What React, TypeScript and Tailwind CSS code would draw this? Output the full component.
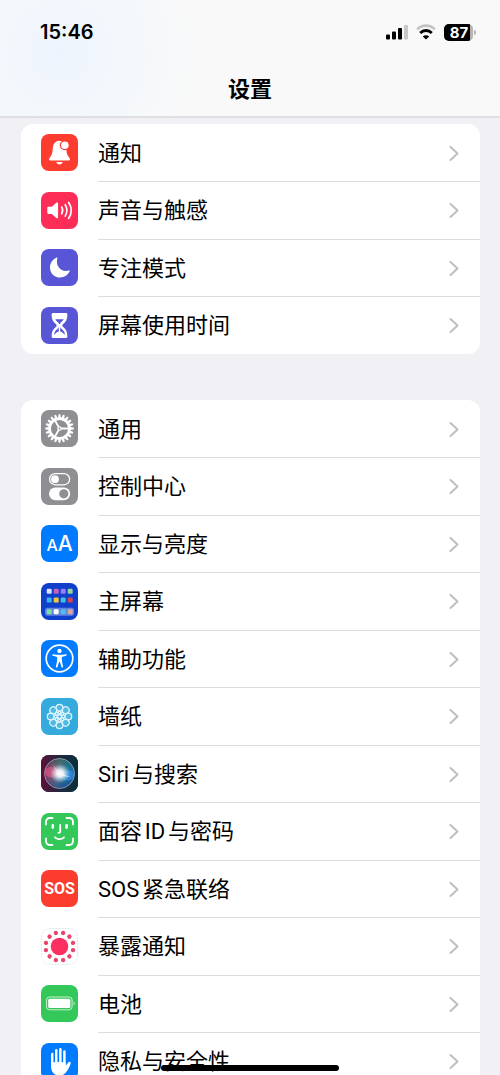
import type { ReactNode } from "react"

const GEAR_TEETH = Array.from({ length: 20 }, (_, i) => i * 18)
const PETALS = Array.from({ length: 8 }, (_, i) => i * 45)
const DOTS = Array.from({ length: 12 }, (_, i) => i * 30 + 15)

const HOME_APPS = [
    ["#d5e3fb", "#c65fc0", "#9b7bf5", "#8fd6a0"],
    ["#35b4ee", "#f3c93a", "#45bfe0", "#d4454f"],
    ["#7be0a0", "#ffffff", "#4cc0ee", "#d8a79c"],
]

function Glyph({ children }: { children: ReactNode }) {
    return (
        <svg viewBox="0 0 37 37" className="size-full" fill="none" aria-hidden="true">
            {children}
        </svg>
    )
}

function BellIcon() {
    return (
        <Glyph>
            <path d="M18.300 6.800c-4.800.3-6.400 4-6.600 8.300-.2 4.600-1.300 6.800-3.200 9-.8 1-.5 2.500.9 2.500h18.200c1.400 0 1.700-1.500.9-2.500-1.900-2.200-3-4.400-3.200-9-.3-4-2.200-8-7-8.300z" fill="white" />
            <path d="M15.300 28h6.400c-.4 1.500-1.600 2.500-3.200 2.500s-2.800-1-3.200-2.500z" fill="white" />
            <circle cx="23.800" cy="11.200" r="5" fill="#fd3c30" />
            <circle cx="23.800" cy="11.200" r="3.800" fill="white" />
        </Glyph>
    )
}

function SpeakerIcon() {
    return (
        <Glyph>
            <path d="M6.300 16.200c0-.9.500-1.400 1.400-1.400h3.100l4.500-4c.8-.7 1.800-.3 1.800.8v13.600c0 1.100-1 1.500-1.800.8l-4.500-4H7.700c-.9 0-1.400-.5-1.400-1.400z" fill="white" />
            <path d="M20.700 14.900c1.200 2.200 1.200 4.800 0 7M24.200 12.700c2.200 3.600 2.200 7.800 0 11.400M27.700 10.500c3.300 5 3.300 10.800 0 15.800" stroke="white" strokeWidth="1.700" strokeLinecap="round" />
        </Glyph>
    )
}

function MoonIcon() {
    return (
        <Glyph>
            <path d="M15.700 8.500c.5-.2.900.2.700.7-2.300 7.500 3.900 14.600 11.600 12.300.6-.2 1 .3.700.8-1.800 3.800-5.400 6.200-9.600 6.200C13.400 28.500 9 24 9 18.400c0-4.400 2.600-8.200 6.700-9.900z" fill="white" />
        </Glyph>
    )
}

function HourglassIcon() {
    return (
        <Glyph>
            <path d="M12.200 6h12.600c1 0 1.600.6 1.600 1.500 0 4.800-1.400 7.300-4.200 9.400-1.100.8-1.100 2.400 0 3.200 2.800 2.100 4.200 4.600 4.200 9.400 0 .9-.6 1.500-1.600 1.500H12.200c-1 0-1.600-.6-1.600-1.500 0-4.800 1.400-7.300 4.200-9.400 1.100-.8 1.100-2.400 0-3.200-2.800-2.100-4.200-4.600-4.200-9.400 0-.9.600-1.500 1.600-1.500z" fill="white" />
            <path d="M14.300 12.300h8.400c-.6 1.200-1.600 2.200-3 3.200-.5.400-.6.900-.6 1.600h-1.200c0-.7-.1-1.200-.6-1.600-1.400-1-2.400-2-3-3.200z" fill="#5856d6" />
            <path d="M17.800 18v6.600c-2 .7-3.800 1.900-4.800 3.500.2-3 1.500-4.800 3.600-6.400.9-.7 1.200-1.500 1.200-3.700zM19.200 18v6.600c2 .7 3.800 1.900 4.800 3.500-.2-3-1.500-4.800-3.600-6.400-.9-.7-1.200-1.500-1.200-3.700z" fill="#5856d6" />
        </Glyph>
    )
}

function GearIcon() {
    return (
        <Glyph>
            {GEAR_TEETH.map((angle) => (
                <path key={angle} d="M17 8.500l.6-4.200h1.800l.6 4.200z" fill="white" transform={`rotate(${angle} 18.500 18.500)`} />
            ))}
            <circle cx="18.500" cy="18.500" r="9.900" stroke="white" strokeWidth="2.600" />
            <path d="M18.500 18.500h10M18.500 18.500l-5-8.700M18.500 18.500l-5 8.700" stroke="white" strokeWidth="1.800" />
            <circle cx="18.500" cy="18.500" r="2.200" fill="white" />
            <circle cx="18.500" cy="18.500" r=".9" fill="#8e8e93" />
        </Glyph>
    )
}

function TogglesIcon() {
    return (
        <Glyph>
            <rect x="8.600" y="5.600" width="20" height="11.200" rx="5.600" stroke="white" strokeWidth="1.300" />
            <circle cx="14" cy="11.200" r="3.900" fill="white" />
            <rect x="8" y="19.400" width="21.200" height="12.800" rx="6.400" fill="white" />
            <circle cx="22.800" cy="25.800" r="4.600" fill="#8e8e93" />
        </Glyph>
    )
}

function TextSizeIcon() {
    return (
        <span className="flex items-baseline justify-center font-['Inter'] font-medium leading-none text-white">
            <span className="text-[16px]">A</span>
            <span className="text-[21px]">A</span>
        </span>
    )
}

function HomeScreenIcon() {
    return (
        <Glyph>
            <rect x="4" y="24.700" width="29" height="8" rx="2.500" fill="white" fillOpacity=".35" />
            {HOME_APPS.map((row, r) =>
                row.map((color, c) => (
                    <rect key={`${r}-${c}`} x={5.700 + c * 7} y={[5.800, 14.600, 26.200][r]} width="5" height="5" rx="1.200" fill={color} />
                ))
            )}
        </Glyph>
    )
}

function AccessibilityIcon() {
    return (
        <Glyph>
            <circle cx="18.500" cy="18.500" r="13.300" stroke="white" strokeWidth="1.700" />
            <circle cx="18.500" cy="10.900" r="2.200" fill="white" />
            <path d="M12.200 14.200c4.200.8 8.400.8 12.600 0 1-.2 1.300 1.200.3 1.500l-3.600 1c-.5.100-.7.400-.7.900 0 3 .5 5.700 1.300 8.900.3 1.100-1.200 1.500-1.600.5l-1.600-5h-.8l-1.600 5c-.4 1-1.900.6-1.600-.5.800-3.200 1.300-5.900 1.300-8.900 0-.5-.2-.8-.7-.9l-3.600-1c-1-.3-.7-1.700.3-1.500z" fill="white" />
        </Glyph>
    )
}

function FlowerIcon() {
    return (
        <Glyph>
            {PETALS.map((angle) => (
                <g key={angle} transform={`rotate(${angle} 18.500 18.500)`} stroke="#dcf6ff" strokeWidth="1.300">
                    <circle cx="18.500" cy="9.700" r="3.400" fill="#7fd0ee" fillOpacity=".4" />
                    <path d="M18.500 16.400c-1.800-1.200-1.800-2.500 0-3.300 1.800.8 1.800 2.100 0 3.300z" />
                </g>
            ))}
            <circle cx="18.500" cy="18.500" r="1.900" stroke="#dcf6ff" strokeWidth="1.200" />
        </Glyph>
    )
}

function SiriIcon() {
    return (
        <Glyph>
            <defs>
                <linearGradient id="siri-bg" x1="0" y1="0" x2="1" y2="0">
                    <stop offset="0" stopColor="#5c0f38" />
                    <stop offset=".5" stopColor="#20283f" />
                    <stop offset="1" stopColor="#07313a" />
                </linearGradient>
                <linearGradient id="siri-orb" x1="0" y1=".4" x2="1" y2=".6">
                    <stop offset="0" stopColor="#b3205c" />
                    <stop offset=".45" stopColor="#7c8398" />
                    <stop offset=".7" stopColor="#2b86a8" />
                    <stop offset="1" stopColor="#1b5fc4" />
                </linearGradient>
                <linearGradient id="siri-shade" x1="0" y1="0" x2="0" y2="1">
                    <stop offset="0" stopColor="#1d5a50" stopOpacity=".7" />
                    <stop offset=".45" stopColor="#0b4a42" stopOpacity="0" />
                    <stop offset="1" stopColor="#163a8c" stopOpacity=".7" />
                </linearGradient>
                <radialGradient id="siri-glow">
                    <stop offset="0" stopColor="white" />
                    <stop offset=".35" stopColor="white" stopOpacity=".85" />
                    <stop offset="1" stopColor="#bfe6ff" stopOpacity="0" />
                </radialGradient>
            </defs>
            <rect width="37" height="37" fill="url(#siri-bg)" />
            <circle cx="18.500" cy="18.500" r="15" fill="url(#siri-orb)" />
            <circle cx="18.500" cy="18.500" r="15" fill="url(#siri-shade)" stroke="#a3b4bc" strokeOpacity=".8" strokeWidth=".9" />
            <ellipse cx="10.500" cy="17" rx="6.500" ry="5.500" fill="#f0608c" fillOpacity=".5" />
            <ellipse cx="27" cy="20.500" rx="6.500" ry="5" fill="#3a9cf0" fillOpacity=".55" />
            <ellipse cx="19" cy="18.500" rx="10" ry="9.500" fill="url(#siri-glow)" />
            <path d="M12 8c2 5 4 8 7.500 10.500L30 22c-4-.3-8-.6-11-2.500C16 17 13 13 12 8z" fill="white" fillOpacity=".6" />
        </Glyph>
    )
}

function FaceIcon() {
    return (
        <Glyph>
            <g stroke="white" strokeWidth="1.800" strokeLinecap="round">
                <path d="M5 11.500V9c0-2.600 1.400-4 4-4h2.500M25.500 5H28c2.600 0 4 1.400 4 4v2.500M32 25.500V28c0 2.600-1.400 4-4 4h-2.500M11.500 32H9c-2.600 0-4-1.400-4-4v-2.500" />
                <path d="M19.200 12v6.200c0 1.100-.5 1.600-1.800 1.600" />
                <path d="M14 24.300c2.600 2.300 6.400 2.300 9 0" />
            </g>
            <path d="M11.800 12.400v2.200M25.600 12.400v2.200" stroke="white" strokeWidth="2.600" strokeLinecap="round" />
        </Glyph>
    )
}

function SosIcon() {
    return <span className="font-['Roboto'] text-[16px] font-bold leading-none text-white">SOS</span>
}

function ExposureIcon() {
    return (
        <Glyph>
            <rect x=".5" y=".5" width="36" height="36" rx="8" stroke="#dfe6e8" strokeDasharray="2 1" />
            <circle cx="18.500" cy="18.500" r="8.800" fill="#fb2f60" />
            {DOTS.map((angle) => (
                <circle key={angle} cx="18.500" cy="4.500" r="2.200" fill="#e8476d" transform={`rotate(${angle} 18.500 18.500)`} />
            ))}
        </Glyph>
    )
}

function BatteryIcon() {
    return (
        <Glyph>
            <rect x="5.500" y="12" width="25.600" height="12.800" rx="3" stroke="#c9f2d2" strokeWidth="1" />
            <rect x="7.200" y="13.700" width="22.200" height="9.400" rx="1.500" fill="white" />
            <path d="M32.600 16.600c1.600.8 1.600 3 0 3.800z" fill="#c9f2d2" />
        </Glyph>
    )
}

function HandIcon() {
    return (
        <Glyph>
            <path d="M11.300 11v11M15.300 7.300V20M19.400 6.300V20M23.400 8.500V22" stroke="white" strokeWidth="2.500" strokeLinecap="round" />
            <path d="M10.050 19h14.600v3.800l2.600-3.300c.9-1.200 2.800-.7 2.400.9-.9 2.900-2.200 5.600-4 8.100-1.900 2.700-4.100 4-7.200 4-5.400 0-8.400-3.700-8.400-9.200z" fill="white" />
            <path d="M13.300 11v8M17.350 9v9.500M21.400 10v9" stroke="#007aff" strokeWidth=".9" strokeLinecap="round" />
        </Glyph>
    )
}

interface Setting {
    label: string
    tile: string
    icon: ReactNode
}

const GROUPS: Setting[][] = [
    [
        { label: "通知", tile: "bg-[#fd3c30]", icon: <BellIcon /> },
        { label: "声音与触感", tile: "bg-[#fd2d58]", icon: <SpeakerIcon /> },
        { label: "专注模式", tile: "bg-[#5856d6]", icon: <MoonIcon /> },
        { label: "屏幕使用时间", tile: "bg-[#5856d6]", icon: <HourglassIcon /> },
    ],
    [
        { label: "通用", tile: "bg-[#8e8e93]", icon: <GearIcon /> },
        { label: "控制中心", tile: "bg-[#8e8e93]", icon: <TogglesIcon /> },
        { label: "显示与亮度", tile: "bg-[#007aff]", icon: <TextSizeIcon /> },
        { label: "主屏幕", tile: "bg-[#103fcb]", icon: <HomeScreenIcon /> },
        { label: "辅助功能", tile: "bg-[#007aff]", icon: <AccessibilityIcon /> },
        { label: "墙纸", tile: "bg-[#35aadc]", icon: <FlowerIcon /> },
        { label: "Siri与搜索", tile: "bg-[#20283f]", icon: <SiriIcon /> },
        { label: "面容ID与密码", tile: "bg-[#34c759]", icon: <FaceIcon /> },
        { label: "SOS紧急联络", tile: "bg-[#fd3c30]", icon: <SosIcon /> },
        { label: "暴露通知", tile: "bg-white", icon: <ExposureIcon /> },
        { label: "电池", tile: "bg-[#34c759]", icon: <BatteryIcon /> },
        { label: "隐私与安全性", tile: "bg-[#007aff]", icon: <HandIcon /> },
    ],
]

function StatusBar() {
    return (
        <div className="flex h-16 items-center justify-between pl-10 pr-6">
            <time className="text-[20px] font-semibold leading-6">15:46</time>
            <div className="flex items-center gap-2">
                <svg viewBox="0 0 22 16" className="h-4 w-[22px]" aria-hidden="true">
                    <rect x="0" y="10.500" width="4" height="5" rx="1" />
                    <rect x="6" y="7.500" width="4" height="8" rx="1" />
                    <rect x="12" y="4" width="4" height="11.500" rx="1" />
                    <rect x="18" y="1" width="4" height="14.500" rx="1" fill="#c8c8c8" />
                </svg>
                <svg viewBox="0 0 20 16" className="h-4 w-5" fill="none" aria-hidden="true">
                    <path d="M1.200 5.200C6.200.4 13.800.4 18.800 5.200" stroke="#c4c4c4" strokeWidth="2.600" />
                    <path d="M4.200 8.900c3.300-3.200 8.300-3.200 11.600 0" stroke="black" strokeWidth="2.800" />
                    <path d="M10 15.600l-3.200-3.200c1.800-1.600 4.600-1.600 6.400 0z" fill="black" />
                </svg>
                <div className="flex items-center gap-px">
                    <div className="flex h-[17px] w-[29px] overflow-hidden rounded-[5px] bg-[#b4b4b4]">
                        <span className="w-[26px] bg-black pl-1 text-center text-[15px] font-bold leading-[17px] text-white">87</span>
                    </div>
                    <span className="h-[5px] w-[2px] rounded-r-full bg-[#b4b4b4]" />
                </div>
            </div>
        </div>
    )
}

function SettingRow({ label, tile, icon }: Setting) {
    return (
        <li className="group h-[57px] even:h-[58px]">
            <a href="#" className="flex h-full gap-5 pl-5">
                <span className={`flex size-[37px] shrink-0 items-center justify-center self-center overflow-hidden rounded-[8px] ${tile}`}>
                    {icon}
                </span>
                <span className="flex flex-1 items-center justify-between border-t border-[#dcdcde] pr-[21px] pt-px group-first:border-transparent">
                    <span className="font-['Roboto','Noto_Sans_CJK_SC',sans-serif] text-[22px] leading-8 [text-autospace:normal]">{label}</span>
                    <svg viewBox="0 0 10 16" className="h-4 w-[10px]" fill="none" aria-hidden="true">
                        <path d="M1.500 1L8.500 7.500l-7 6.500" stroke="#bfbfc2" strokeWidth="2" strokeLinecap="round" strokeLinejoin="round" />
                    </svg>
                </span>
            </a>
        </li>
    )
}

export default function App() {
    return (
        <div className="relative flex h-screen flex-col overflow-hidden bg-[#f0f0f5] font-['Inter','Noto_Sans_CJK_SC',sans-serif] text-black" lang="zh-CN">
            <header className="shrink-0 border-b-2 border-[#dfdfe3] bg-[#f9f9f9] bg-[radial-gradient(circle_at_12%_45%,#eef4fe_0%,#f4f8fb_16%,#f9f9f9_32%)]">
                <StatusBar />
                <h1 className="flex h-[52px] items-center justify-center pb-[2px] text-[22px] font-bold leading-8">设置</h1>
            </header>
            <main className="flex min-h-0 flex-1 flex-col gap-[46px] overflow-hidden pl-[21px] pr-5 pt-[6px]">
                {GROUPS.map((group, index) => (
                    <ul key={index} className="shrink-0 rounded-[12px] bg-white">
                        {group.map((setting) => (
                            <SettingRow key={setting.label} {...setting} />
                        ))}
                    </ul>
                ))}
            </main>
            <div className="absolute bottom-1 left-1/2 h-[6px] w-[178px] -translate-x-1/2 rounded-full bg-black" />
        </div>
    )
}
